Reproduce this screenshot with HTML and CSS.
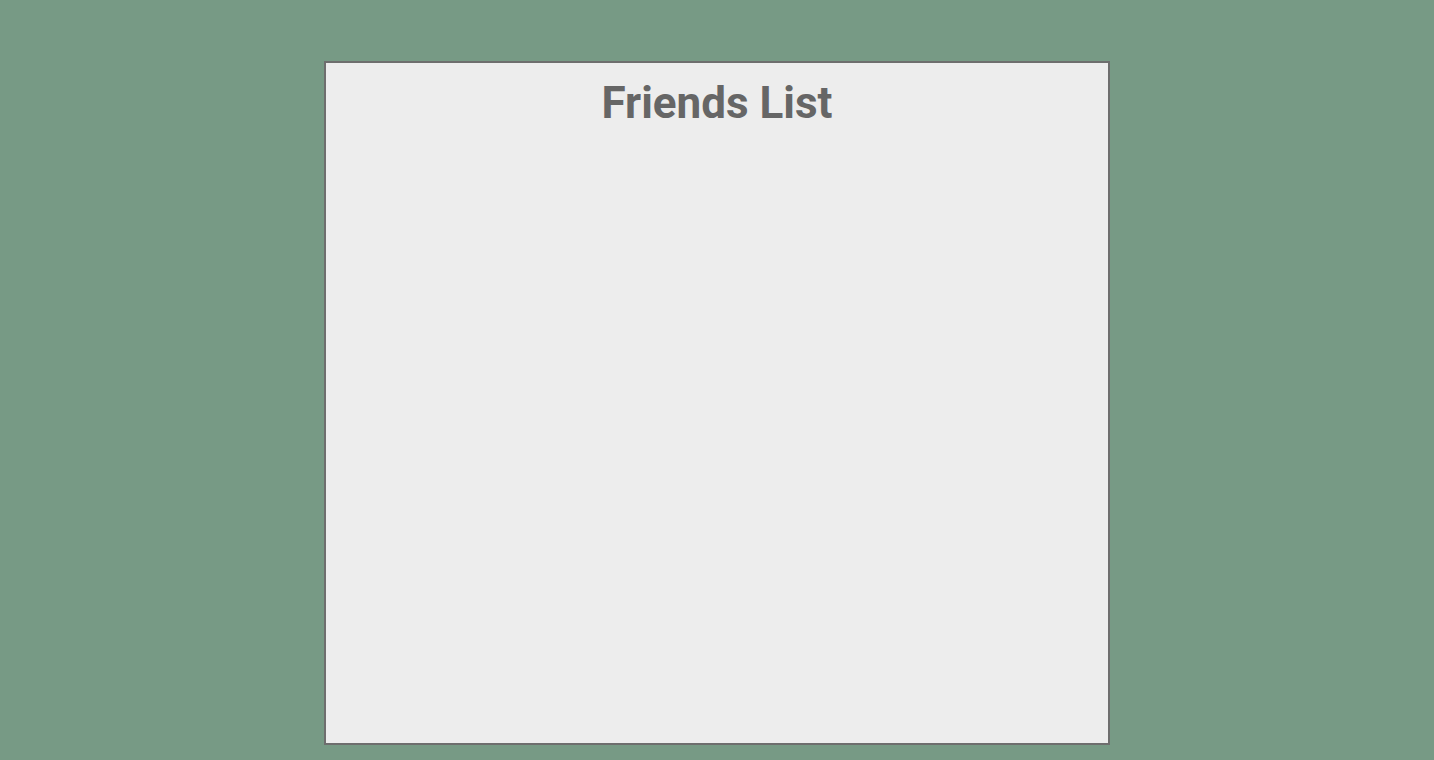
FILE: index.html
```html
<!DOCTYPE html>
<html lang="en">
<head>
<meta charset="utf-8">
<title>Friends List</title>
<link rel="stylesheet" href="styles.css">
</head>
<body>
<main class="page">
  <section class="friends">
    <h1 class="friends-title">Friends List</h1>
  </section>
</main>
</body>
</html>
```

FILE: styles.css
```css
html, body {
  margin: 0;
  padding: 0;
}
body {
  background: #779a85;
  font-family: Roboto, "Liberation Sans", sans-serif;
  height: 760px;
}
.page {
  display: flex;
  justify-content: center;
  padding-top: 61px;
}
.friends {
  box-sizing: border-box;
  width: 786px;
  height: 684px;
  background: #ededed;
  border: 2px solid #6e6e6e;
  padding-top: 14px;
}
.friends-title {
  margin: 0;
  text-align: center;
  color: #666;
  font-size: 44px;
  font-weight: 700;
  line-height: normal;
}
```
